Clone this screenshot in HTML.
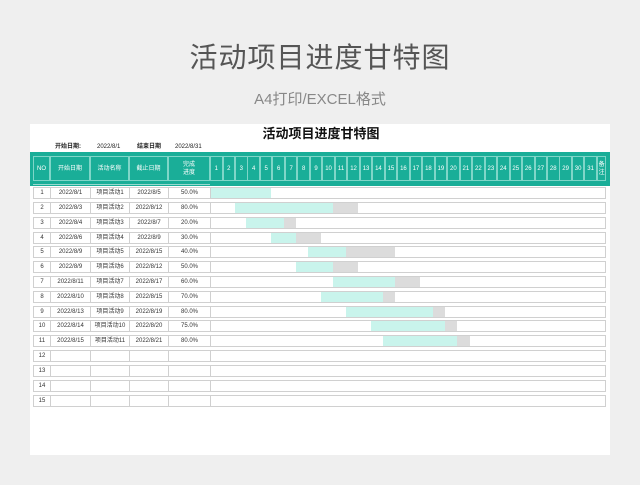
<!DOCTYPE html>
<html><head><meta charset="utf-8"><style>
*{margin:0;padding:0;box-sizing:border-box}
body{width:640px;height:485px;background:#efefef;position:relative;overflow:hidden;font-family:"Liberation Sans","Noto Sans CJK SC",sans-serif}
.a{position:absolute}
.t1{left:0;width:640px;top:36px;text-align:center;font-size:28px;color:#555;letter-spacing:1px}
.t2{left:0;width:640px;top:88px;text-align:center;font-size:15px;color:#888}
.card{left:30px;top:124px;width:580px;height:331px;background:#fff}
.hd{left:30px;top:152px;width:580px;height:34px;background:#1aae98}
.hc{top:156px;height:25px;border:1px solid #7fd6c8;color:#fff;font-size:6px;display:flex;align-items:center;justify-content:center;text-align:center;line-height:8px}
.r{left:33px;width:573px;height:12px;border:1px solid #d0d0d0;font-size:6px;color:#333}
.r span{position:absolute;top:0;height:10px;line-height:10px;text-align:center;border-right:1px solid #d0d0d0}
.b{height:10px}
.g{background:#c9f4ec}.y{background:#dcdcdc}
.info{top:143px;font-size:6px;line-height:8px;height:8px;color:#222;font-weight:bold}
</style></head><body>
<div class="a t1">活动项目进度甘特图</div>
<div class="a t2">A4打印/EXCEL格式</div>
<div class="a card"></div>
<div class="a" style="left:30px;width:580px;top:123px;text-align:center;font-size:13px;font-weight:bold;color:#111;padding-left:2px">活动项目进度甘特图</div>
<div class="a info" style="left:55px">开始日期:</div>
<div class="a info" style="left:97px;font-weight:normal">2022/8/1</div>
<div class="a info" style="left:137px">结束日期</div>
<div class="a info" style="left:175px;font-weight:normal">2022/8/31</div>
<div class="a hd"></div>
<div class="a hc" style="left:33px;width:17px">NO</div>
<div class="a hc" style="left:50px;width:40px">开始日期</div>
<div class="a hc" style="left:90px;width:39px">活动名称</div>
<div class="a hc" style="left:129px;width:39px">截止日期</div>
<div class="a hc" style="left:168px;width:42px">完成<br>进度</div>
<div class="a hc" style="left:210px;width:12.5px">1</div><div class="a hc" style="left:222.5px;width:12.5px">2</div><div class="a hc" style="left:235px;width:12.5px">3</div><div class="a hc" style="left:247.4px;width:12.5px">4</div><div class="a hc" style="left:259.9px;width:12.5px">5</div><div class="a hc" style="left:272.4px;width:12.5px">6</div><div class="a hc" style="left:284.9px;width:12.5px">7</div><div class="a hc" style="left:297.4px;width:12.5px">8</div><div class="a hc" style="left:309.8px;width:12.5px">9</div><div class="a hc" style="left:322.3px;width:12.5px">10</div><div class="a hc" style="left:334.8px;width:12.5px">11</div><div class="a hc" style="left:347.3px;width:12.5px">12</div><div class="a hc" style="left:359.8px;width:12.5px">13</div><div class="a hc" style="left:372.2px;width:12.5px">14</div><div class="a hc" style="left:384.7px;width:12.5px">15</div><div class="a hc" style="left:397.2px;width:12.5px">16</div><div class="a hc" style="left:409.7px;width:12.5px">17</div><div class="a hc" style="left:422.2px;width:12.5px">18</div><div class="a hc" style="left:434.6px;width:12.5px">19</div><div class="a hc" style="left:447.1px;width:12.5px">20</div><div class="a hc" style="left:459.6px;width:12.5px">21</div><div class="a hc" style="left:472.1px;width:12.5px">22</div><div class="a hc" style="left:484.6px;width:12.5px">23</div><div class="a hc" style="left:497px;width:12.5px">24</div><div class="a hc" style="left:509.5px;width:12.5px">25</div><div class="a hc" style="left:522px;width:12.5px">26</div><div class="a hc" style="left:534.5px;width:12.5px">27</div><div class="a hc" style="left:547px;width:12.5px">28</div><div class="a hc" style="left:559.4px;width:12.5px">29</div><div class="a hc" style="left:571.9px;width:12.5px">30</div><div class="a hc" style="left:584.4px;width:12.5px">31</div>
<div class="a hc" style="left:596.9px;width:9.5px">备<br>注</div>
<div class="a" style="left:33px;top:184px;width:177px;height:1px;background:#9ad9cf"></div>

<div class="a r" style="top:187px"><span style="left:0;width:17px">1</span><span style="left:17px;width:40px">2022/8/1</span><span style="left:57px;width:39px">项目活动1</span><span style="left:96px;width:39px">2022/8/5</span><span style="left:135px;width:42px">50.0%</span></div>
<div class="a r" style="top:202px"><span style="left:0;width:17px">2</span><span style="left:17px;width:40px">2022/8/3</span><span style="left:57px;width:39px">项目活动2</span><span style="left:96px;width:39px">2022/8/12</span><span style="left:135px;width:42px">80.0%</span></div>
<div class="a r" style="top:217px"><span style="left:0;width:17px">3</span><span style="left:17px;width:40px">2022/8/4</span><span style="left:57px;width:39px">项目活动3</span><span style="left:96px;width:39px">2022/8/7</span><span style="left:135px;width:42px">20.0%</span></div>
<div class="a r" style="top:232px"><span style="left:0;width:17px">4</span><span style="left:17px;width:40px">2022/8/6</span><span style="left:57px;width:39px">项目活动4</span><span style="left:96px;width:39px">2022/8/9</span><span style="left:135px;width:42px">30.0%</span></div>
<div class="a r" style="top:246px"><span style="left:0;width:17px">5</span><span style="left:17px;width:40px">2022/8/9</span><span style="left:57px;width:39px">项目活动5</span><span style="left:96px;width:39px">2022/8/15</span><span style="left:135px;width:42px">40.0%</span></div>
<div class="a r" style="top:261px"><span style="left:0;width:17px">6</span><span style="left:17px;width:40px">2022/8/9</span><span style="left:57px;width:39px">项目活动6</span><span style="left:96px;width:39px">2022/8/12</span><span style="left:135px;width:42px">50.0%</span></div>
<div class="a r" style="top:276px"><span style="left:0;width:17px">7</span><span style="left:17px;width:40px">2022/8/11</span><span style="left:57px;width:39px">项目活动7</span><span style="left:96px;width:39px">2022/8/17</span><span style="left:135px;width:42px">60.0%</span></div>
<div class="a r" style="top:291px"><span style="left:0;width:17px">8</span><span style="left:17px;width:40px">2022/8/10</span><span style="left:57px;width:39px">项目活动8</span><span style="left:96px;width:39px">2022/8/15</span><span style="left:135px;width:42px">70.0%</span></div>
<div class="a r" style="top:306px"><span style="left:0;width:17px">9</span><span style="left:17px;width:40px">2022/8/13</span><span style="left:57px;width:39px">项目活动9</span><span style="left:96px;width:39px">2022/8/19</span><span style="left:135px;width:42px">80.0%</span></div>
<div class="a r" style="top:320px"><span style="left:0;width:17px">10</span><span style="left:17px;width:40px">2022/8/14</span><span style="left:57px;width:39px">项目活动10</span><span style="left:96px;width:39px">2022/8/20</span><span style="left:135px;width:42px">75.0%</span></div>
<div class="a r" style="top:335px"><span style="left:0;width:17px">11</span><span style="left:17px;width:40px">2022/8/15</span><span style="left:57px;width:39px">项目活动11</span><span style="left:96px;width:39px">2022/8/21</span><span style="left:135px;width:42px">80.0%</span></div>
<div class="a r" style="top:350px"><span style="left:0;width:17px">12</span><span style="left:17px;width:40px"></span><span style="left:57px;width:39px"></span><span style="left:96px;width:39px"></span><span style="left:135px;width:42px"></span></div>
<div class="a r" style="top:365px"><span style="left:0;width:17px">13</span><span style="left:17px;width:40px"></span><span style="left:57px;width:39px"></span><span style="left:96px;width:39px"></span><span style="left:135px;width:42px"></span></div>
<div class="a r" style="top:380px"><span style="left:0;width:17px">14</span><span style="left:17px;width:40px"></span><span style="left:57px;width:39px"></span><span style="left:96px;width:39px"></span><span style="left:135px;width:42px"></span></div>
<div class="a r" style="top:395px"><span style="left:0;width:17px">15</span><span style="left:17px;width:40px"></span><span style="left:57px;width:39px"></span><span style="left:96px;width:39px"></span><span style="left:135px;width:42px"></span></div>

<div class="a b g" style="left:211px;width:60px;top:188px"></div>
<div class="a b g" style="left:235px;width:98px;top:203px"></div><div class="a b y" style="left:333px;width:25px;top:203px"></div>
<div class="a b g" style="left:246px;width:38px;top:218px"></div><div class="a b y" style="left:284px;width:12px;top:218px"></div>
<div class="a b g" style="left:271px;width:25px;top:233px"></div><div class="a b y" style="left:296px;width:25px;top:233px"></div>
<div class="a b g" style="left:308px;width:38px;top:247px"></div><div class="a b y" style="left:346px;width:49px;top:247px"></div>
<div class="a b g" style="left:296px;width:37px;top:262px"></div><div class="a b y" style="left:333px;width:25px;top:262px"></div>
<div class="a b g" style="left:333px;width:62px;top:277px"></div><div class="a b y" style="left:395px;width:25px;top:277px"></div>
<div class="a b g" style="left:321px;width:62px;top:292px"></div><div class="a b y" style="left:383px;width:12px;top:292px"></div>
<div class="a b g" style="left:346px;width:87px;top:307px"></div><div class="a b y" style="left:433px;width:12px;top:307px"></div>
<div class="a b g" style="left:371px;width:74px;top:321px"></div><div class="a b y" style="left:445px;width:12px;top:321px"></div>
<div class="a b g" style="left:383px;width:74px;top:336px"></div><div class="a b y" style="left:457px;width:13px;top:336px"></div>
</body></html>
